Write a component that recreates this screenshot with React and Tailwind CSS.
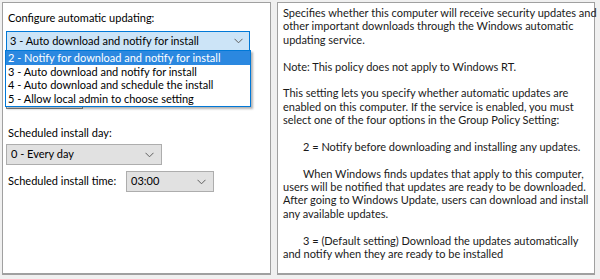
import React from "react";

const Chevron = ({ className = "" }) => (
  <svg width="9" height="6" viewBox="0 0 9 6" className={className}>
    <path d="M0.5 0.8 L4.5 4.8 L8.5 0.8" fill="none" stroke="#606060" strokeWidth="1" />
  </svg>
);

const font = { fontFamily: 'Lato, "Noto Sans", sans-serif' };

export default function App() {
  const right = [
    { t: "Specifies whether this computer will receive security updates and" },
    { t: "other important downloads through the Windows automatic" },
    { t: "updating service." },
    { t: "" },
    { t: "Note: This policy does not apply to Windows RT." },
    { t: "" },
    { t: "This setting lets you specify whether automatic updates are" },
    { t: "enabled on this computer. If the service is enabled, you must" },
    { t: "select one of the four options in the Group Policy Setting:" },
    { t: "" },
    { t: "2 = Notify before downloading and installing any updates.", i: true },
    { t: "" },
    { t: "When Windows finds updates that apply to this computer,", i: true },
    { t: "users will be notified that updates are ready to be downloaded." },
    { t: "After going to Windows Update, users can download and install" },
    { t: "any available updates." },
    { t: "" },
    { t: "3 = (Default setting) Download the updates automatically", i: true },
    { t: "and notify when they are ready to be installed" },
  ];
  return (
    <div
      className="w-[600px] h-[279px] bg-[#f0f0f0] flex gap-[6px] pl-[2px] pt-[2px] text-[11px] text-black overflow-hidden"
      style={font}
    >
      <div className="relative w-[269px] h-[273px] bg-white border border-[#a0a0a0] border-b-2 pl-[3px] pt-[8px]">
        <div className="leading-[14px] pl-[2px]">Configure automatic updating:</div>
        <div className="mt-[6px] w-[244px] h-[20px] bg-[#cce4f7] border border-[#0078d7] flex items-center justify-between pl-[3px] pr-[6px]">
          <span>3 - Auto download and notify for install</span>
          <Chevron />
        </div>
        <div className="mt-[40px] w-[77px] h-[18px] border border-[#8a8a8a]" />
        <div className="mt-[17px] leading-[14px] pl-[2px]">Scheduled install day:</div>
        <div className="mt-[4px] w-[156px] h-[21px] bg-[#e1e1e1] border border-[#adadad] flex items-center justify-between pl-[4px] pr-[7px]">
          <span>0 - Every day</span>
          <Chevron />
        </div>
        <div className="mt-[6px] flex items-center">
          <span className="pl-[2px] w-[120px]">Scheduled install time:</span>
          <div className="w-[88px] h-[21px] bg-[#e1e1e1] border border-[#adadad] flex items-center justify-between pl-[4px] pr-[7px]">
            <span>03:00</span>
            <Chevron />
          </div>
        </div>
        <div className="absolute left-[2px] top-[47px] w-[246px] bg-white border border-[#0078d7] shadow-[2px_2px_2px_rgba(0,0,0,0.3)] leading-[13.5px] pb-[1px]">
          <div className="bg-[#2b88e0] text-white pl-[2px]">2 - Notify for download and notify for install</div>
          <div className="pl-[2px]">3 - Auto download and notify for install</div>
          <div className="pl-[2px]">4 - Auto download and schedule the install</div>
          <div className="pl-[2px]">5 - Allow local admin to choose setting</div>
        </div>
      </div>
      <div className="w-[318px] h-[273px] bg-white border border-[#a0a0a0] border-b-2 pl-[5px] pt-[3px] leading-[13.4px] text-[11px] text-[#1a1a1a]">
        {right.map((l, k) => (
          <div key={k} className={`h-[13.4px] whitespace-nowrap ${l.i ? "pl-[20px]" : ""}`}>
            {l.t}
          </div>
        ))}
      </div>
    </div>
  );
}
